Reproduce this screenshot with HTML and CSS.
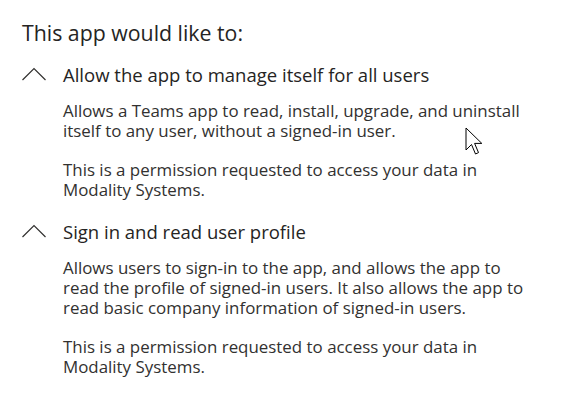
FILE: index.html
```html
<!DOCTYPE html>
<html lang="en">
<head>
<meta charset="utf-8">
<title>Permissions</title>
<link rel="stylesheet" href="styles.css">
</head>
<body>
<main class="consent">
  <h1 class="consent-heading">This app would like to:</h1>
  <section class="perm">
    <div class="perm-title">
      <svg class="chevron" width="24" height="14" viewBox="0 0 24 14" aria-hidden="true"><path d="M0.5 13 L12 1.5 L23.5 13" fill="none" stroke="#323130" stroke-width="1.2"/></svg>
      <span>Allow the app to manage itself for all users</span>
    </div>
    <div class="perm-body">
      <p>Allows a Teams app to read, install, upgrade, and uninstall itself to any user, without a signed-in user.</p>
      <p>This is a permission requested to access your data in Modality Systems.</p>
    </div>
  </section>
  <section class="perm">
    <div class="perm-title">
      <svg class="chevron" width="24" height="14" viewBox="0 0 24 14" aria-hidden="true"><path d="M0.5 13 L12 1.5 L23.5 13" fill="none" stroke="#323130" stroke-width="1.2"/></svg>
      <span>Sign in and read user profile</span>
    </div>
    <div class="perm-body">
      <p>Allows users to sign-in to the app, and allows the app to read the profile of signed-in users. It also allows the app to read basic company information of signed-in users.</p>
      <p>This is a permission requested to access your data in Modality Systems.</p>
    </div>
  </section>
</main>
<svg class="cursor" width="20" height="30" viewBox="0 0 20 30" aria-hidden="true"><path d="M1 1 L1 23 L6.5 17.5 L10.5 27 L13.5 25.6 L9.6 16.4 L16.8 16.4 Z" fill="#fff" stroke="#000" stroke-width="1" stroke-linejoin="miter"/></svg>
</body>
</html>
```
FILE: styles.css
```css
html, body {
  margin: 0;
  background: #ffffff;
}
body {
  font-family: "Open Sans", "Noto Sans", sans-serif;
  color: #323130;
  position: relative;
  width: 583px;
  height: 400px;
  overflow: hidden;
}
.consent {
  padding: 19px 0 0 22px;
  width: 520px;
}
.consent-heading {
  margin: 0 0 16px;
  font-size: 21.3px;
  line-height: 28px;
  font-weight: 400;
  color: #252423;
}
.perm {
  margin-bottom: 20px;
}
.perm-title {
  display: flex;
  align-items: center;
  gap: 17px;
  font-size: 18.5px;
  line-height: 24px;
  color: #252423;
}
.chevron {
  flex: none;
  position: relative;
  top: -1px;
}
.perm-body {
  padding-left: 41px;
  margin-top: 14px;
  font-size: 16.9px;
  line-height: 20px;
}
.perm-body p {
  margin: 0 0 19px;
  max-width: 470px;
}
.perm-body p:last-child {
  margin-bottom: 0;
}
.cursor {
  position: absolute;
  left: 465px;
  top: 127px;
}
```
